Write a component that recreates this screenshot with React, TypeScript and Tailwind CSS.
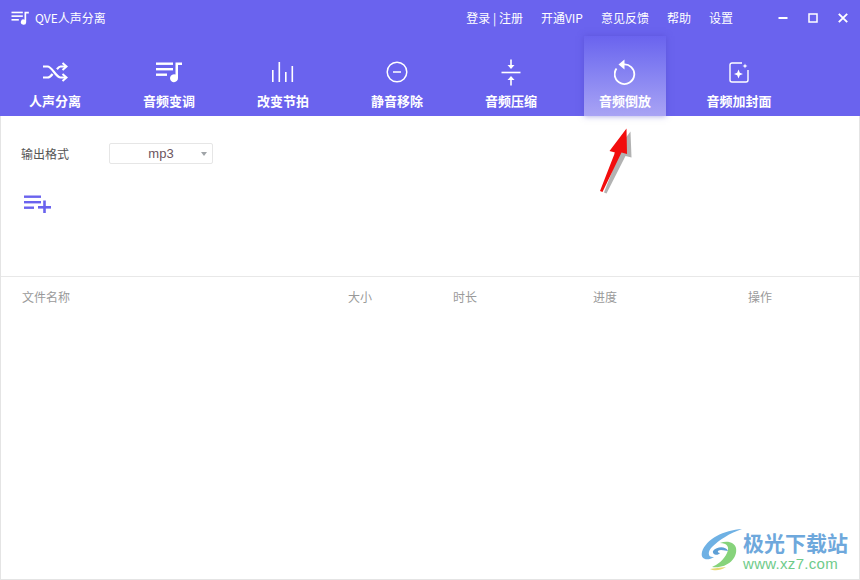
const font = { fontFamily: '"Noto Sans CJK SC", "Liberation Sans", sans-serif' }

function PlaylistIcon({ className }: { className: string }) {
  return (
    <svg className={className} viewBox="0 0 27 21" fill="currentColor">
      <rect x="0" y="1" width="17" height="2.4" />
      <rect x="0" y="6.5" width="17" height="2.4" />
      <rect x="0" y="12" width="11" height="2.4" />
      <path d="M19.5 1H26V3.6H22V16.5A4 4 0 1 1 19.5 13Z" />
    </svg>
  )
}

const tabs = [
  {
    label: "人声分离",
    icon: (
      <svg className="h-[24px] w-[26px]" viewBox="0 0 26 24" fill="none" stroke="currentColor" strokeWidth="2.2">
        <path d="M1 6.5H5.5C10 6.5 14 17.5 18.5 17.5H23" />
        <path d="M1 17.5H5.5C7.5 17.5 9.2 15.8 10.6 14M15 9.2C16 8 17.2 6.5 18.5 6.5H23" />
        <path d="M20.5 3L24.5 6.5L20.5 10M20.5 14L24.5 17.5L20.5 21" strokeWidth="2" />
      </svg>
    ),
  },
  { label: "音频变调", icon: <PlaylistIcon className="h-[22px] w-[27px]" /> },
  {
    label: "改变节拍",
    icon: (
      <svg className="h-[22px] w-[22px]" viewBox="0 0 22 22" fill="currentColor">
        <rect x="0" y="9" width="1.6" height="12" />
        <rect x="6.5" y="1" width="1.6" height="20" />
        <rect x="13" y="11" width="1.6" height="10" />
        <rect x="19.5" y="5" width="1.6" height="16" />
      </svg>
    ),
  },
  {
    label: "静音移除",
    icon: (
      <svg className="h-[22px] w-[22px]" viewBox="0 0 22 22" fill="none" stroke="currentColor" strokeWidth="1.5">
        <circle cx="11" cy="11" r="9.8" />
        <path d="M7 11H15" />
      </svg>
    ),
  },
  {
    label: "音频压缩",
    icon: (
      <svg className="h-[27px] w-[20px]" viewBox="0 0 20 27" fill="none" stroke="currentColor" strokeWidth="1.6">
        <path d="M0.5 13.5H19.5" />
        <path d="M10 0.5V8" />
        <path d="M10 26.5V19" />
        <path d="M6.5 6H13.5L10 10Z" fill="currentColor" strokeWidth="0" />
        <path d="M6.5 21H13.5L10 17Z" fill="currentColor" strokeWidth="0" />
      </svg>
    ),
  },
  {
    label: "音频倒放",
    active: true,
    icon: (
      <svg className="h-[26px] w-[22px]" viewBox="0 0 22 26" fill="none" stroke="currentColor" strokeWidth="1.8">
        <path d="M9 5.5A9.8 9.8 0 1 1 2.5 9.5" />
        <path d="M10.5 0.5L4.5 5.5L10.5 10.5Z" fill="currentColor" strokeWidth="0" />
      </svg>
    ),
  },
  {
    label: "音频加封面",
    icon: (
      <svg className="h-[21px] w-[20px]" viewBox="0 0 20 21" fill="none" stroke="currentColor" strokeWidth="1.4">
        <path d="M13 1H3A2 2 0 0 0 1 3V18A2 2 0 0 0 3 20H17A2 2 0 0 0 19 18V8" />
        <path d="M9.5 7.5L10.8 10.7L14 12L10.8 13.3L9.5 16.5L8.2 13.3L5 12L8.2 10.7Z" fill="currentColor" strokeWidth="0" />
        <path d="M16 1.5L16.7 3.3L18.5 4L16.7 4.7L16 6.5L15.3 4.7L13.5 4L15.3 3.3Z" fill="currentColor" strokeWidth="0" />
      </svg>
    ),
  },
]

const menu = ["登录 | 注册", "开通VIP", "意见反馈", "帮助", "设置"]

export default function App() {
  return (
    <div className="relative flex h-[580px] w-[860px] flex-col overflow-hidden bg-white" style={font}>
      <div className="flex h-[116px] flex-col bg-[#6a63ee] text-white">
        <div className="flex h-[36px] items-center pl-[11px] pr-[12px]">
          <PlaylistIcon className="h-[14px] w-[19px]" />
          <span className="ml-[5px] text-[12px] leading-none">QVE人声分离</span>
          <div className="ml-auto flex items-center gap-[18px] text-[12px] leading-none">
            {menu.map((m) => (
              <span key={m}>{m}</span>
            ))}
            <div className="ml-[27px] flex items-center gap-[20px]">
              <svg className="h-[10px] w-[10px]" viewBox="0 0 10 10" fill="currentColor">
                <rect x="0.5" y="4" width="9" height="2" />
              </svg>
              <svg className="h-[10px] w-[10px]" viewBox="0 0 10 10" fill="none" stroke="currentColor" strokeWidth="1.5">
                <rect x="1" y="1" width="8" height="8" />
              </svg>
              <svg className="h-[10px] w-[10px]" viewBox="0 0 10 10" fill="none" stroke="currentColor" strokeWidth="1.9">
                <path d="M0.8 0.8L9.2 9.2M9.2 0.8L0.8 9.2" />
              </svg>
            </div>
          </div>
        </div>
        <div className="flex h-[80px] gap-[32px] pl-[14px]">
          {tabs.map((t) => (
            <div
              key={t.label}
              className={
                t.active
                  ? "relative flex w-[82px] flex-col items-center whitespace-nowrap bg-gradient-to-b from-[#6a63ee] to-[#a9a3f4] shadow-[0_0_6px_rgba(80,70,200,0.5)]"
                  : "relative flex w-[82px] flex-col items-center whitespace-nowrap"
              }
            >
              <div className="flex h-[50px] w-full items-center justify-center pt-[22px]">{t.icon}</div>
              <span className="mt-[8px] text-[13px] font-bold leading-none">{t.label}</span>
            </div>
          ))}
        </div>
      </div>

      <div className="flex flex-1 flex-col border-x border-b border-[#e4e4e4]">
        <div className="flex items-center pl-[20px] pt-[27px]">
          <span className="w-[88px] text-[12px] leading-none text-[#555555]">输出格式</span>
          <div className="relative flex h-[21px] w-[104px] items-center justify-center rounded-[2px] border border-[#e6e6e6] text-[13px] text-[#6b5560]">
            <span className="font-['Liberation_Sans'] leading-none">mp3</span>
            <span className="absolute right-[5px] top-[8px] h-0 w-0 border-x-[3px] border-t-[4px] border-x-transparent border-t-[#a0a4a8]" />
          </div>
        </div>
        <svg className="ml-[23px] mt-[31px] h-[18px] w-[27px] text-[#6a63ee]" viewBox="0 0 27 18" fill="currentColor">
          <rect x="0" y="0.5" width="17" height="2.4" />
          <rect x="0" y="6" width="17" height="2.4" />
          <rect x="0" y="11.5" width="10" height="2.4" />
          <rect x="14" y="11" width="13" height="2.6" />
          <rect x="19.2" y="5.5" width="2.6" height="12.5" />
        </svg>
        <div className="mt-[63px] flex h-[41px] items-center border-t border-[#e8e8e8] pl-[21px] text-[12px] leading-none text-[#9a9a9a]">
          <span className="w-[326px]">文件名称</span>
          <span className="w-[105px]">大小</span>
          <span className="w-[140px]">时长</span>
          <span className="w-[155px]">进度</span>
          <span>操作</span>
        </div>
      </div>

      {/* red arrow drawn over the screenshot */}
      <svg className="absolute left-[595px] top-[125px] h-[72px] w-[40px]" viewBox="0 0 40 72">
        <path d="M6.5 66L21 28.5L16.5 27L33 5L34 31L28 29.5L9 67Z" fill="#555555" opacity="0.45" transform="translate(2.5 1.5)" />
        <path d="M5 66L20 27.5L14.5 26L31.5 3.5L32 29L26.5 27.5L7.5 67Z" fill="#f20d0d" />
      </svg>

      {/* watermark */}
      <div className="absolute left-[700px] top-[527px] flex items-center">
        <svg className="h-[46px] w-[46px]" viewBox="0 0 46 46" fill="none">
          <path d="M42 2C24 3 6 12 2 25C0 33 8 34 14 30C8 31 7 25 12 20C19 13 30 6 42 2Z" fill="#6fb1e4" />
          <path d="M12 40C26 42 38 32 36 21C35 16 28 13 20 16C27 16 30 20 27 26C24 33 17 38 12 40Z" fill="#86d37b" />
          <path d="M10 42C14 44 20 44 26 40C20 41 14 41 10 42Z" fill="#e7d873" />
          <path d="M28 24C26 19 17 19 13 24C12 28 18 29 20 26C17 26 17 23 21 23C24 23 26 24 28 24Z" fill="#5d9fd6" />
        </svg>
        <div className="ml-[-3px] flex flex-col">
          <span className="text-[21px] font-bold leading-[26px] text-[#6ea8dc]">极光下载站</span>
          <span className="font-['Liberation_Sans'] text-[15px] leading-[17px] tracking-[0.3px] text-[#6fcb8a]">www.xz7.com</span>
        </div>
      </div>
    </div>
  )
}
